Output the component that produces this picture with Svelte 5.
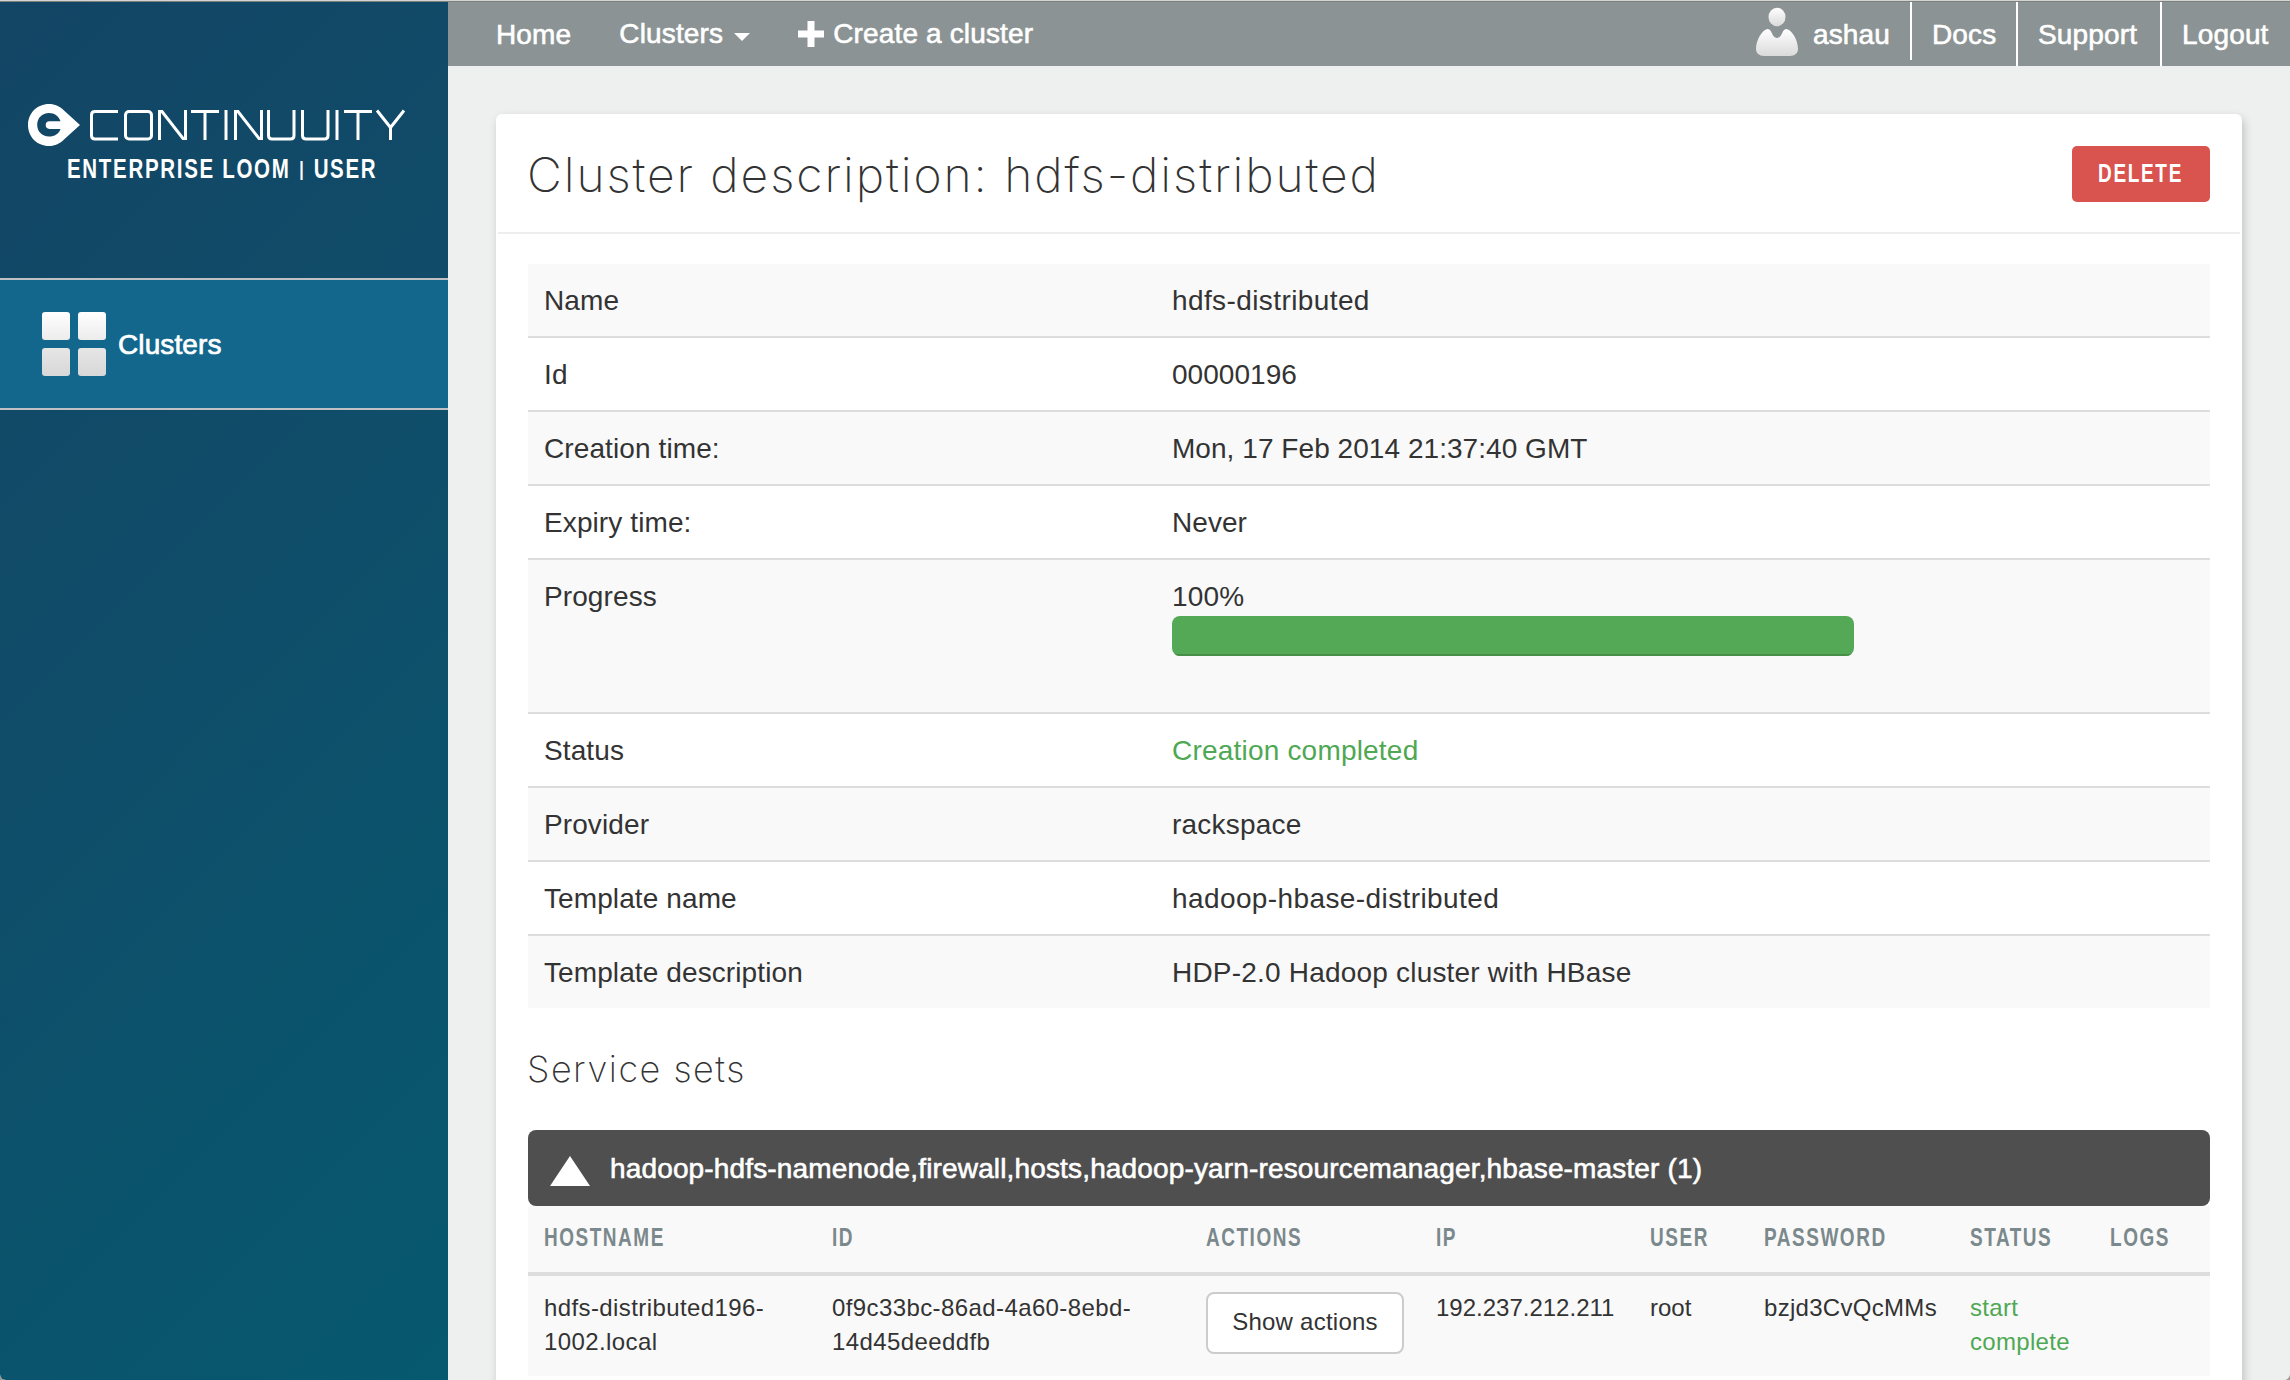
<script>
  const rows = [
    { label: 'Name', value: 'hdfs-distributed', wide: true },
    { label: 'Id', value: '00000196', tight: true },
    { label: 'Creation time:', value: 'Mon, 17 Feb 2014 21:37:40 GMT', tight: true },
    { label: 'Expiry time:', value: 'Never', tight: true },
    { label: 'Progress', value: '100%', progress: 100 },
    { label: 'Status', value: 'Creation completed', ok: true },
    { label: 'Provider', value: 'rackspace' },
    { label: 'Template name', value: 'hadoop-hbase-distributed', wide: true },
    { label: 'Template description', value: 'HDP-2.0 Hadoop cluster with HBase' },
  ];
  const columns = ['Hostname', 'ID', 'Actions', 'IP', 'User', 'Password', 'Status', 'Logs'];
</script>

<div class="window">
  <div class="chrome"></div>
  <div class="page">
    <aside>
      <div class="brand">
        <svg class="logo" width="380" height="44" viewBox="0 0 380 44" fill="none">
          <path fill="#fff" fill-rule="evenodd" d="M22 1C10 1 1 10.300 1 22s9 21 21 21c6 0 11-2.500 15-6.500L53 22 37 7.500C33 3.500 28 1 22 1Zm0 9c5.500 0 10 3.300 11.500 8.300H22.500a3.800 3.800 0 0 0 0 7.600h11C32 30.700 27.500 33.500 22 33.500c-7 0-11.800-5-11.800-11.700S15 10 22 10Z" />
          <g stroke="#fff" stroke-width="3">
            <path d="M91 8.500H68Q64.500 8.500 64.500 12V32.500Q64.500 36 68 36H91" />
            <rect x="98.500" y="8.500" width="26" height="27.500" rx="3.500" />
            <path d="M132.500 37V8.500H135L156 35.500H158.500V7" />
            <path d="M164 8.500H192M178 8.500V37" />
            <path d="M199 7V37" />
            <path d="M208.500 37V8.500H211L232 35.500H234.500V7" />
            <path d="M241.500 7V32.500Q241.500 36 245 36H263.500Q267 36 267 32.500V7" />
            <path d="M275.500 7V32.500Q275.500 36 279 36H297.500Q301 36 301 32.500V7" />
            <path d="M310 7V37" />
            <path d="M317 8.500H345M331 8.500V37" />
            <path d="M350 7.500L363.500 24.500L377 7.500M363.500 24V37" />
          </g>
        </svg>
        <div class="product"><span class="narrow">ENTERPRISE LOOM <span class="bar-mark">|</span> USER</span></div>
      </div>
      <a class="side-item" href="#clusters">
        <span class="tiles"><i></i><i></i><i class="low"></i><i class="low"></i></span>
        <span class="side-label">Clusters</span>
      </a>
    </aside>

    <div class="content">
      <nav>
        <div class="left">
          <a href="#home">Home</a>
          <a class="drop" href="#list">Clusters <b class="caret"></b></a>
          <a class="create" href="#create">
            <svg width="26" height="26" viewBox="0 0 26 26"><path fill="#fff" d="M9.500 0h7v9.500H26v7h-9.500V26h-7v-9.500H0v-7h9.500z" /></svg>
            Create a cluster
          </a>
        </div>
        <div class="right">
          <a class="user" href="#user">
            <svg width="44" height="50" viewBox="0 0 44 50">
              <defs><linearGradient id="av" x1="0" y1="0" x2="0" y2="1"><stop offset="0" stop-color="#fff" /><stop offset="1" stop-color="#dadada" /></linearGradient></defs>
              <ellipse cx="22" cy="10" rx="8.500" ry="9.300" fill="url(#av)" />
              <path fill="url(#av)" d="M12.500 22C14.500 22 15.500 23 17 26.500 18.500 30 20.500 31 22 31s3.500-1 5-4.500C28.500 23 29.500 22 31.500 22 37 23 43 33 43 42c0 4-3 7-8 7H9c-5 0-8-3-8-7 0-9 6-19 11.500-20Z" />
            </svg>
            <span>ashau</span>
          </a>
          <a class="docs" href="#docs">Docs</a>
          <a class="support" href="#support">Support</a>
          <a class="logout" href="#logout">Logout</a>
        </div>
      </nav>

      <main>
        <header>
          <h1>Cluster description: hdfs-distributed</h1>
          <button class="delete"><span class="narrow">DELETE</span></button>
        </header>
        <div class="body">
          <div class="details">
            {#each rows as row}
              <div class="row">
                <div class="label">{row.label}</div>
                <div class="value" class:ok={row.ok} class:wide={row.wide} class:tight={row.tight}>
                  {row.value}
                  {#if row.progress}
                    <div class="progress"><div class="bar" style="width: {row.progress}%"></div></div>
                  {/if}
                </div>
              </div>
            {/each}
          </div>

          <h2>Service sets</h2>
          <div class="set">
            <span class="up"></span>
            <span>hadoop-hdfs-namenode,firewall,hosts,hadoop-yarn-resourcemanager,hbase-master (1)</span>
          </div>
          <div class="grid head">
            {#each columns as column}
              <div><span class="narrow">{column}</span></div>
            {/each}
          </div>
          <div class="grid node">
            <div class="wide">hdfs-distributed196-<br />1002.local</div>
            <div class="wide">0f9c33bc-86ad-4a60-8ebd-<br />14d45deeddfb</div>
            <div><button class="show">Show actions</button></div>
            <div>192.237.212.211</div>
            <div>root</div>
            <div class="medium">bzjd3CvQcMMs</div>
            <div class="ok medium">start<br />complete</div>
            <div></div>
          </div>
        </div>
      </main>
    </div>
  </div>
</div>

<style>
  :global(body) { margin: 0; overflow: hidden; background: #999; }
  * { box-sizing: border-box; }
  a { color: #fff; text-decoration: none; }
  .window {
    width: 2290px; height: 1380px; overflow: hidden;
    display: flex; flex-direction: column; border-radius: 0 0 6px 6px;
    font: 28px/40px "Liberation Sans", Arial, sans-serif; color: #333;
    background: #eef0f0;
  }
  .chrome { height: 2px; flex: none; background: #d4d4d4; border-bottom: 1px solid #7d817c; }
  .page { flex: 1; display: flex; min-height: 0; }
  aside { width: 448px; flex: none; background: linear-gradient(135deg, #134565 0%, #0f4e6a 48%, #06596f 100%); }
  .narrow { display: inline-block; white-space: nowrap; transform: scaleX(0.76); transform-origin: left center; }
  .brand { height: 276px; padding: 101px 0 0 27px; }
  .logo { display: block; }
  .product {
    width: 400px; padding: 6px 0 0 40px; color: #fff;
    font: bold 27px/32px "Liberation Sans", Arial, sans-serif; letter-spacing: 2.2px;
  }
  .bar-mark { font-size: 21px; position: relative; top: -2px; margin: 0 1px 0 2px; }
  .side-item {
    height: 132px; display: flex; align-items: center; gap: 12px; padding-left: 42px;
    background: #13678d; border-top: 2px solid #bfc1c2; border-bottom: 2px solid #bfc1c2;
    letter-spacing: 0.1px; -webkit-text-stroke: 0.7px #fff;
  }
  .side-label { padding-top: 2px; }
  .tiles { display: grid; grid-template-columns: 28px 28px; gap: 8px; }
  .tiles i { height: 28px; border-radius: 3px; background: linear-gradient(#fff, #ececec); }
  .tiles .low { background: linear-gradient(#e6e6e6, #d8d8d8); }

  .content { flex: 1; min-width: 0; }
  nav {
    height: 64px; display: flex; justify-content: space-between; background: #8b9394; color: #fff;
    line-height: 66px; letter-spacing: 0.15px; -webkit-text-stroke: 0.6px #fff; padding-left: 48px;
  }
  .left, .right { display: flex; }
  .left { gap: 48px; height: 64px; }
  .drop { display: flex; align-items: center; gap: 11px; }
  .caret { border: 8px solid transparent; border-top-color: #fff; border-bottom: 0; margin-top: 5px; }
  .create { display: flex; align-items: center; gap: 9px; }
  .right a { height: 64px; }
  .right .user { height: 58px; display: flex; gap: 14px; border-right: 2px solid #fff; padding-right: 20px; }
  .user svg { margin-top: 5px; }
  .right .docs, .right .support { border-right: 2px solid #fff; padding-left: 20px; width: 106px; }
  .right .support { width: 144px; }
  .logout { width: 128px; padding-left: 20px; }

  main {
    width: 1746px; height: 1300px; margin: 48px 0 0 48px; background: #fff; border-radius: 6px 6px 0 0;
    box-shadow: 2px 4px 10px rgba(0, 0, 0, 0.2);
  }
  header {
    height: 120px; margin: 0 2px; padding: 2px 30px 0; display: flex; justify-content: space-between; align-items: center;
    border-bottom: 2px solid #eee;
  }
  h1, h2 { margin: 0 0 0 -1px; font-family: Inter, "Liberation Sans", sans-serif; font-weight: 200; }
  h1 { font-size: 48px; letter-spacing: 1.9px; padding-top: 2px; }
  h2 { font-size: 36px; line-height: 40px; letter-spacing: 1.5px; padding: 41px 0 41px; }
  .delete {
    width: 138px; height: 56px; border: 0; border-radius: 5px; background: #d9534f; color: #fff;
    padding: 0 0 0 26px; text-align: left;
    font: bold 25px/54px "Liberation Sans", Arial, sans-serif; letter-spacing: 2.2px;
  }
  .delete .narrow { padding-bottom: 2px; }
  .body { padding: 30px 32px 0; }
  .row { display: grid; grid-template-columns: 628px 1fr; padding: 17px 16px 15px; border-top: 2px solid #ddd; letter-spacing: 0.2px; }
  .row:first-child { border-top: 0; }
  .row:nth-child(odd) { background: #f9f9f9; }
  .label { letter-spacing: 0.1px; }
  .tight { letter-spacing: 0.05px; }
  .medium { letter-spacing: 0.3px; }
  .wide { letter-spacing: 0.4px; }
  .ok { color: #4fa853; }
  .progress { width: 682px; height: 40px; margin: -1px 0 41px; border-radius: 8px; overflow: hidden; }
  .bar { height: 100%; background: #53a955; box-shadow: inset 0 -2px #478f49; }
  .set {
    height: 76px; display: flex; align-items: center; gap: 20px; padding: 1px 0 0 22px; border-radius: 8px;
    background: #4f4f4f; color: #fff; letter-spacing: 0.15px; -webkit-text-stroke: 0.6px #fff;
  }
  .up { border: 20px solid transparent; border-bottom: 30px solid #fff; border-top: 0; margin-top: 5px; }
  .grid { display: grid; grid-template-columns: 288px 374px 230px 214px 114px 206px 140px 1fr; padding-left: 16px; background: #f9f9f9; white-space: nowrap; }
  .head {
    height: 70px; border-bottom: 4px solid #ddd; color: #7b898c; text-transform: uppercase;
    font: bold 25px/63px "Liberation Sans", Arial, sans-serif; letter-spacing: 2px;
  }
  .node { height: 100px; padding-top: 15px; font-size: 24px; line-height: 34px; }
  .show {
    width: 198px; height: 62px; margin-top: 1px; border: 2px solid #ccc; border-radius: 8px; background: #fff; color: #333;
    font: 24px/54px "Liberation Sans", sans-serif; letter-spacing: 0.25px; padding: 0 0 2px;
  }
</style>
